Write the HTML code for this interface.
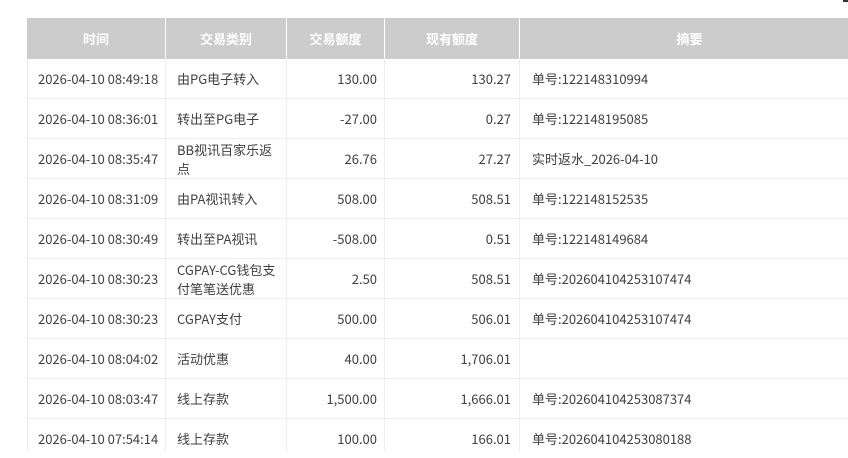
<!DOCTYPE html>
<html lang="zh">
<head>
<meta charset="utf-8">
<title>交易记录</title>
<style>
html,body{margin:0;padding:0;background:#fff;}
body{width:848px;height:452px;overflow:hidden;position:relative;font-family:"Noto Sans CJK SC","Liberation Sans",sans-serif;font-size:13px;color:#404040;}
#mark{position:absolute;left:843px;top:0;width:5px;height:2px;background:#2f3348;}
#head{position:absolute;left:27px;top:18px;width:832px;height:41px;background:#ccc;}
.h{position:absolute;top:18px;height:41px;line-height:41px;text-align:center;color:#fff;font-weight:700;}
.hs{position:absolute;top:18px;height:41px;width:1px;background:#fff;}
.vl{position:absolute;top:59px;height:393px;width:1px;background:#eee;}
.hl{position:absolute;left:27px;width:821px;height:1px;background:#eee;}
.c{position:absolute;height:39px;display:flex;align-items:center;line-height:19px;}
.r{justify-content:flex-end;text-align:right;}
.t{left:38px;width:125px;white-space:nowrap;}
.k{left:177px;width:100px;}
.a{left:287px;width:90px;}
.b{left:385px;width:126px;}
.s{left:532px;width:300px;white-space:nowrap;}
</style>
</head>
<body>
<div id="mark"></div>
<div id="head"></div>
<div class="h" style="left:27px;width:138px">时间</div>
<div class="h" style="left:166px;width:120px">交易类别</div>
<div class="h" style="left:287px;width:97px">交易额度</div>
<div class="h" style="left:385px;width:134px">现有额度</div>
<div class="h" style="left:520px;width:339px">摘要</div>
<div class="hs" style="left:165px"></div>
<div class="hs" style="left:286px"></div>
<div class="hs" style="left:384px"></div>
<div class="hs" style="left:519px"></div>
<div class="vl" style="left:27px"></div>
<div class="vl" style="left:165px"></div>
<div class="vl" style="left:286px"></div>
<div class="vl" style="left:384px"></div>
<div class="vl" style="left:519px"></div>
<div class="hl" style="top:98px"></div>
<div class="hl" style="top:138px"></div>
<div class="hl" style="top:178px"></div>
<div class="hl" style="top:218px"></div>
<div class="hl" style="top:258px"></div>
<div class="hl" style="top:298px"></div>
<div class="hl" style="top:338px"></div>
<div class="hl" style="top:378px"></div>
<div class="hl" style="top:418px"></div>

<div class="c t" style="top:59px">2026-04-10 08:49:18</div>
<div class="c k" style="top:59px">由PG电子转入</div>
<div class="c a r" style="top:59px">130.00</div>
<div class="c b r" style="top:59px">130.27</div>
<div class="c s" style="top:59px">单号:122148310994</div>

<div class="c t" style="top:99px">2026-04-10 08:36:01</div>
<div class="c k" style="top:99px">转出至PG电子</div>
<div class="c a r" style="top:99px">-27.00</div>
<div class="c b r" style="top:99px">0.27</div>
<div class="c s" style="top:99px">单号:122148195085</div>

<div class="c t" style="top:139px">2026-04-10 08:35:47</div>
<div class="c k" style="top:139px">BB视讯百家乐返点</div>
<div class="c a r" style="top:139px">26.76</div>
<div class="c b r" style="top:139px">27.27</div>
<div class="c s" style="top:139px">实时返水_2026-04-10</div>

<div class="c t" style="top:179px">2026-04-10 08:31:09</div>
<div class="c k" style="top:179px">由PA视讯转入</div>
<div class="c a r" style="top:179px">508.00</div>
<div class="c b r" style="top:179px">508.51</div>
<div class="c s" style="top:179px">单号:122148152535</div>

<div class="c t" style="top:219px">2026-04-10 08:30:49</div>
<div class="c k" style="top:219px">转出至PA视讯</div>
<div class="c a r" style="top:219px">-508.00</div>
<div class="c b r" style="top:219px">0.51</div>
<div class="c s" style="top:219px">单号:122148149684</div>

<div class="c t" style="top:259px">2026-04-10 08:30:23</div>
<div class="c k" style="top:259px">CGPAY-CG钱包支付笔笔送优惠</div>
<div class="c a r" style="top:259px">2.50</div>
<div class="c b r" style="top:259px">508.51</div>
<div class="c s" style="top:259px">单号:202604104253107474</div>

<div class="c t" style="top:299px">2026-04-10 08:30:23</div>
<div class="c k" style="top:299px">CGPAY支付</div>
<div class="c a r" style="top:299px">500.00</div>
<div class="c b r" style="top:299px">506.01</div>
<div class="c s" style="top:299px">单号:202604104253107474</div>

<div class="c t" style="top:339px">2026-04-10 08:04:02</div>
<div class="c k" style="top:339px">活动优惠</div>
<div class="c a r" style="top:339px">40.00</div>
<div class="c b r" style="top:339px">1,706.01</div>

<div class="c t" style="top:379px">2026-04-10 08:03:47</div>
<div class="c k" style="top:379px">线上存款</div>
<div class="c a r" style="top:379px">1,500.00</div>
<div class="c b r" style="top:379px">1,666.01</div>
<div class="c s" style="top:379px">单号:202604104253087374</div>

<div class="c t" style="top:419px">2026-04-10 07:54:14</div>
<div class="c k" style="top:419px">线上存款</div>
<div class="c a r" style="top:419px">100.00</div>
<div class="c b r" style="top:419px">166.01</div>
<div class="c s" style="top:419px">单号:202604104253080188</div>
</body>
</html>
